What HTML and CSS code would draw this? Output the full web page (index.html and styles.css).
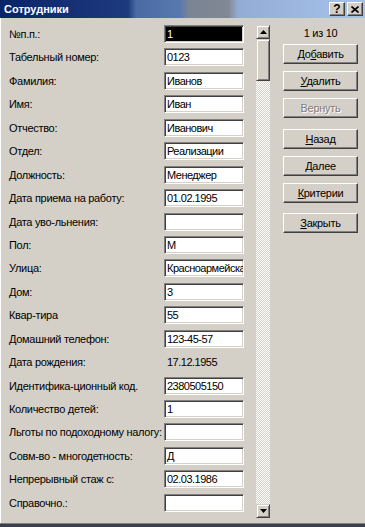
FILE: index.html
```html
<!DOCTYPE html>
<html lang="ru">
<head>
<meta charset="utf-8">
<title>Сотрудники</title>
<link rel="stylesheet" href="styles.css">
</head>
<body>
<div class="window">
  <div class="titlebar">
    <span class="title">Сотрудники</span>
    <div class="caption">
      <span class="cbtn help">?</span>
      <span class="cbtn close"><svg width="8" height="7" viewBox="0 0 8 7"><path d="M0.5 0.5 L7.5 6.5 M7.5 0.5 L0.5 6.5" stroke="#000" stroke-width="1.6" fill="none"/></svg></span>
    </div>
  </div>
  <div class="client">
    <div class="form">
      <span class="lbl">№п.п.:</span><span class="field sel">1</span>
      <span class="lbl">Табельный номер:</span><span class="field">0123</span>
      <span class="lbl">Фамилия:</span><span class="field">Иванов</span>
      <span class="lbl">Имя:</span><span class="field">Иван</span>
      <span class="lbl">Отчество:</span><span class="field">Иванович</span>
      <span class="lbl">Отдел:</span><span class="field">Реализации</span>
      <span class="lbl">Должность:</span><span class="field">Менеджер</span>
      <span class="lbl">Дата приема на работу:</span><span class="field">01.02.1995</span>
      <span class="lbl">Дата уво-льнения:</span><span class="field"></span>
      <span class="lbl">Пол:</span><span class="field">М</span>
      <span class="lbl">Улица:</span><span class="field">Красноармейская</span>
      <span class="lbl">Дом:</span><span class="field">3</span>
      <span class="lbl">Квар-тира</span><span class="field">55</span>
      <span class="lbl">Домашний телефон:</span><span class="field">123-45-57</span>
      <span class="lbl">Дата рождения:</span><span class="value">17.12.1955</span>
      <span class="lbl">Идентифика-ционный код.</span><span class="field">2380505150</span>
      <span class="lbl">Количество детей:</span><span class="field">1</span>
      <span class="lbl">Льготы по подоходному налогу:</span><span class="field"></span>
      <span class="lbl">Совм-во - многодетность:</span><span class="field">Д</span>
      <span class="lbl">Непрерывный стаж с:</span><span class="field">02.03.1986</span>
      <span class="lbl">Справочно.:</span><span class="field"></span>
    </div>
    <div class="scrollbar">
      <div class="sb-btn"><svg width="7" height="4" viewBox="0 0 7 4"><polygon points="3.5,0 7,4 0,4" fill="#000"/></svg></div>
      <div class="sb-thumb"></div>
      <div class="sb-track"></div>
      <div class="sb-btn"><svg width="7" height="4" viewBox="0 0 7 4"><polygon points="0,0 7,0 3.5,4" fill="#000"/></svg></div>
    </div>
    <div class="side">
      <div class="counter">1 из 10</div>
      <div class="group">
        <div class="btn">До<u>б</u>авить</div>
        <div class="btn"><u>У</u>далить</div>
        <div class="btn disabled">Вернуть</div>
      </div>
      <div class="group">
        <div class="btn"><u>Н</u>азад</div>
        <div class="btn"><u>Д</u>алее</div>
        <div class="btn"><u>К</u>ритерии</div>
      </div>
      <div class="group">
        <div class="btn"><u>З</u>акрыть</div>
      </div>
    </div>
  </div>
</div>
</body>
</html>
```

FILE: styles.css
```css
* { box-sizing: border-box; }
html, body { margin: 0; padding: 0; }
body {
  width: 365px;
  height: 527px;
  overflow: hidden;
  background: #d4d0c8;
  font-family: "Liberation Sans", Arial, sans-serif;
  font-size: 11px;
  letter-spacing: -0.3px;
  color: #000;
}
.window {
  width: 365px;
  height: 527px;
  display: flex;
  flex-direction: column;
  background: #d4d0c8;
  border-bottom: 3px solid #3a3f4c;
  box-shadow: inset 0 -1px #808080, inset 1px 0 #fff;
}
.titlebar {
  flex: none;
  height: 18px;
  display: flex;
  align-items: center;
  justify-content: space-between;
  padding: 0 2px 0 4px;
  background: linear-gradient(90deg, #0a246a 0, #1e3a7e 128px, #4a6aa4 136px, #5878b0 180px, #7a8494 188px, #808892 228px, #94acd4 238px, #a6c2ec 365px);
}
.title {
  color: #fff;
  font-weight: bold;
  font-size: 11px;
  letter-spacing: 0;
}
.caption {
  display: flex;
  gap: 2px;
}
.cbtn {
  width: 16px;
  height: 14px;
  display: flex;
  align-items: center;
  justify-content: center;
  background: #d4d0c8;
  border: 1px solid;
  border-color: #fff #404040 #404040 #fff;
  box-shadow: inset -1px -1px #808080;
  font-weight: bold;
  font-size: 12px;
  line-height: 12px;
  letter-spacing: 0;
}
.client {
  flex: 1;
  display: flex;
  align-items: flex-start;
  padding: 7px 0 0 9px;
}
.form {
  width: 235px;
  flex: none;
  display: grid;
  grid-template-columns: 155px 80px;
  grid-auto-rows: 23.45px;
  align-items: start;
}
.lbl {
  height: 18px;
  line-height: 18px;
  white-space: nowrap;
}
.field {
  height: 18px;
  background: #fff;
  border: 1px solid;
  border-color: #808080 #fff #fff #808080;
  box-shadow: inset 1px 1px #404040, inset -1px -1px #d4d0c8;
  padding-left: 2px;
  line-height: 16px;
  letter-spacing: -0.5px;
  white-space: nowrap;
  overflow: hidden;
}
.field.sel {
  background: #000;
  color: #fff;
}
.value {
  height: 18px;
  line-height: 18px;
  padding-left: 3px;
  letter-spacing: -0.5px;
}
.scrollbar {
  flex: none;
  width: 14px;
  height: 493px;
  margin-left: 12px;
  display: flex;
  flex-direction: column;
}
.sb-btn, .sb-thumb {
  flex: none;
  background: #d4d0c8;
  border: 1px solid;
  border-color: #d4d0c8 #404040 #404040 #d4d0c8;
  box-shadow: inset 1px 1px #fff, inset -1px -1px #808080;
}
.sb-btn {
  height: 14px;
  display: flex;
  align-items: center;
  justify-content: center;
}
.sb-btn svg { display: block; }
.sb-thumb { height: 42px; }
.sb-track {
  flex: 1;
  background: repeating-conic-gradient(#fff 0 25%, #d4d0c8 0 50%) 0 0 / 2px 2px;
}
.side {
  flex: none;
  width: 75px;
  margin-left: 13px;
  display: flex;
  flex-direction: column;
}
.counter {
  height: 19px;
  line-height: 17px;
  text-align: center;
}
.group {
  display: flex;
  flex-direction: column;
  gap: 7px;
}
.group + .group { margin-top: 10.5px; }
.btn {
  height: 20px;
  line-height: 18px;
  text-align: center;
  background: #d4d0c8;
  border: 1px solid;
  border-color: #fff #404040 #404040 #fff;
  box-shadow: inset -1px -1px #808080;
}
.btn u { text-underline-offset: 1px; }
.btn.disabled {
  color: #808080;
  text-shadow: 1px 1px #fff;
}
```
